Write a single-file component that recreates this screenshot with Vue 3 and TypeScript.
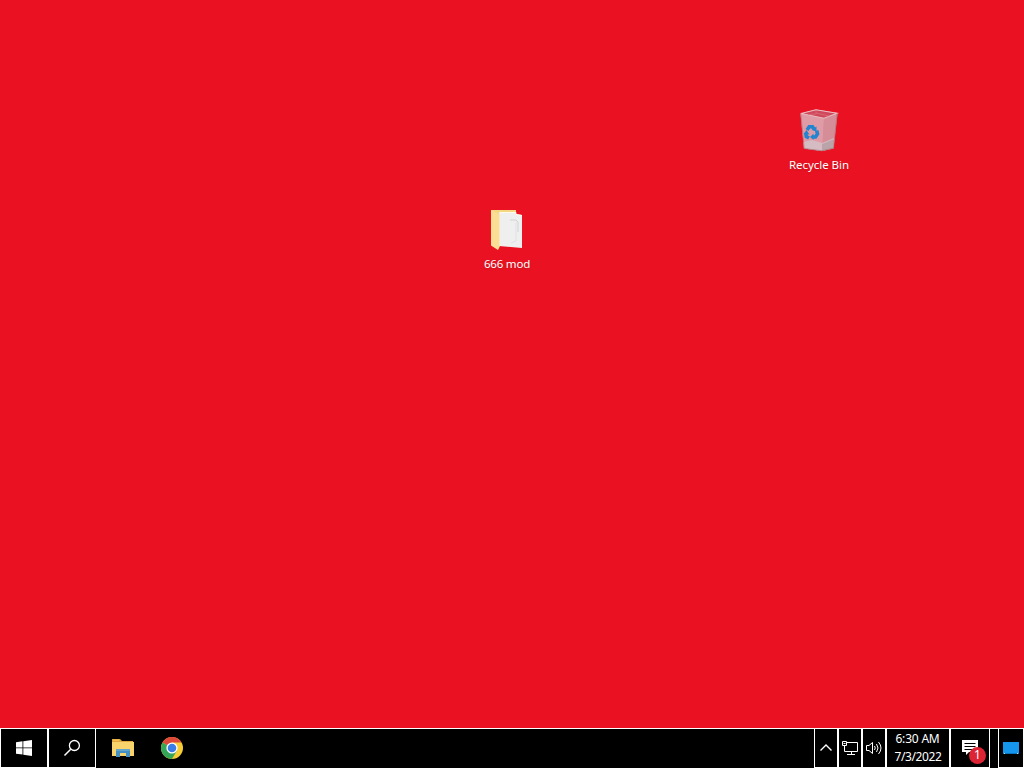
<script setup lang="ts">
const time = '6:30 AM'
const date = '7/3/2022'
const notifications = 1
</script>

<template>
  <div class="screen">
    <main class="desktop">
      <div class="shortcut bin">
        <svg width="42" height="48" viewBox="0 0 42 48">
          <path d="M2.5 7.5 18 3.5 39.5 7 35.5 42.5 24 45 6 42.5Z" fill="#df8c98" />
          <path d="M2.5 7.5 26 12.5 24 45 6 42.5Z" fill="#e09ca6" />
          <path d="M26 12.5 39.5 7 35.5 42.5 24 45Z" fill="#d58d97" />
          <path d="M5.5 36 14 34 24 37 36.3 32 35.5 42 24 45 6 42.5Z" fill="#d4bcc2" />
          <path d="M24 38 36.3 33 35.5 42 24 45Z" fill="#bba3aa" />
          <path d="M3 7.5 18 3.7 39 7.3 26 12.2Z" fill="#d0485b" stroke="#e9bdc0" stroke-width="1.1" />
          <path d="M18 4.5V8L10 8.5M18 7 31 10" fill="none" stroke="#d97480" stroke-width=".7" />
          <path d="M2.8 8 6.2 42.5 24 44.8 35.5 42.2 39.2 7.5" fill="none" stroke="#a96e72" stroke-width=".7" />
          <g fill="none" stroke="#2385cf" stroke-width="3.6">
            <path d="M9 24 11.2 20.7 14.5 20.7 16 23" />
            <path d="M18.7 24.5 19.5 28 17.5 31H14.5" />
            <path d="M11 32 8.3 30.5 7.8 27.5" />
          </g>
          <path d="M18.5 20.5 18.5 25.5 13.5 24ZM15.5 27.5V34L12 31ZM5.5 28 8.5 24 11.5 28.5Z" fill="#2385cf" />
        </svg>
        <span class="bin-label">Recycle Bin</span>
      </div>
      <div class="shortcut folder">
        <svg width="34" height="42" viewBox="0 0 34 42">
          <path d="M1 1H26V36H1Z" fill="#f4d683" />
          <path d="M9 3H26V5L32 6V39L9 37Z" fill="#efefef" />
          <path d="M10 3.5H26V5.5L32 6.5" fill="none" stroke="#fffbe9" stroke-width="1" />
          <path d="M20 11H26L28 13V23" fill="none" stroke="#d0d2d4" stroke-width="1" />
          <path d="M26 13V32L21 34" fill="none" stroke="#e0e1e3" stroke-width="1" />
          <path d="M1 1.5 10 5V37L8 41 1 36.5Z" fill="#fbdd93" />
          <path d="M9.5 5V37" stroke="#f8e9bd" stroke-width="1" />
        </svg>
        <span class="folder-label">666 mod</span>
      </div>
    </main>

    <footer class="taskbar">
      <button class="cell start" aria-label="Start">
        <svg width="16" height="16" viewBox="0 0 16 16" fill="#fff">
          <path d="M0 2.3 6.5 1.3V7.5H0ZM7.3 1.2 16 0V7.5H7.3ZM0 8.3H6.5V14.6L0 13.7ZM7.3 8.3H16V16L7.3 14.8Z" />
        </svg>
      </button>
      <button class="cell start" aria-label="Search">
        <svg width="18" height="18" viewBox="0 0 18 18" fill="none" stroke="#fff">
          <circle cx="11.4" cy="6.5" r="5" stroke-width="1.3" />
          <path d="M7.7 10.3 1.5 16.5" stroke-width="1.5" />
        </svg>
      </button>
      <div class="app explorer">
        <svg width="22" height="20" viewBox="0 0 22 20">
          <path d="M0 1H8L10 3H21V18H0Z" fill="#dfa83f" />
          <path d="M0 4H22V18H0Z" fill="#f9d36b" />
          <path d="M1 1.5H7V3H1Z" fill="#f5bd4b" />
          <path d="M4 11H18V19H14V15H8V19H4Z" fill="#448fc4" />
          <path d="M4 11H18V13H4Z" fill="#64a5cc" />
        </svg>
      </div>
      <div class="app chrome">
        <svg width="22" height="22" viewBox="0 0 22 22">
          <circle cx="11" cy="11" r="11" fill="#f7cc35" />
          <path d="M11 11 1.5 5.5A11 11 0 0 1 20.5 5.5H11Z" fill="#df4738" />
          <path d="M1.5 5.5A11 11 0 0 0 11 22L15.8 13.8 11 11Z" fill="#35a557" />
          <circle cx="11" cy="11" r="5.6" fill="#fff" />
          <circle cx="11" cy="11" r="4.3" fill="#3b7de8" />
        </svg>
      </div>
      <div class="spacer"></div>
      <button class="cell tray" aria-label="Show hidden icons">
        <svg width="14" height="10" viewBox="0 0 14 10" fill="none" stroke="#fff" stroke-width="1.4">
          <path d="M1.5 7.5 7 2 12.5 7.5" />
        </svg>
      </button>
      <button class="cell tray" aria-label="Network">
        <svg width="16" height="14" viewBox="0 0 16 14" fill="none" stroke="#fff">
          <path d="M5 1.5H15.5V10.5H2.5V5M9.5 10.5V13M5 13.5H13M.5.5H4.5V4.5H.5Z" />
          <path d="M1.5 2.5H3.5" />
        </svg>
      </button>
      <button class="cell tray" aria-label="Volume">
        <svg width="18" height="14" viewBox="0 0 18 14" fill="none" stroke="#fff" stroke-width="1">
          <path d="M1.5 4.5H4L7.5 1.5V12.5L4 9.5H1.5ZM9.5 5Q11 7 9.5 9M11.5 3Q14.5 7 11.5 11M13.5 1Q18.5 7 13.5 13" />
        </svg>
      </button>
      <div class="cell clock"><span class="time">{{ time }}</span><span class="date">{{ date }}</span></div>
      <button class="cell action" aria-label="Notifications">
        <svg width="16" height="16" viewBox="0 0 16 16">
          <path d="M0 0H16V12H7L4 15V12H0Z" fill="#fff" />
          <path d="M2.5 3.5H13.5M2.5 6.5H13.5M2.5 9.5H10" stroke="#000" />
        </svg>
        <span class="badge">{{ notifications }}</span>
      </button>
      <button class="cell peek" aria-label="Desktop">
        <svg width="16" height="13" viewBox="0 0 16 13">
          <path d="M0 0H16V12H0Z" fill="#1695ed" />
          <path d="M0 11.5H16" stroke="#0874bd" />
          <path d="M1 11.5H2M14 11.5H15" stroke="#b9e0f7" />
        </svg>
      </button>
    </footer>
  </div>
</template>

<style>
body { margin: 0; overflow: hidden; }
</style>

<style scoped>
.screen {
  width: 1024px;
  height: 768px;
  display: flex;
  flex-direction: column;
  font-family: "Noto Sans", "Open Sans", sans-serif;
  font-size: 12px;
  color: #fff;
}
.desktop { position: relative; flex: 1; background: #ea1222; }
.shortcut {
  position: absolute;
  width: 76px;
  display: flex;
  flex-direction: column;
  align-items: center;
  font-size: 11.5px;
  line-height: 16px;
  white-space: nowrap;
  text-shadow: 0 1px 2px rgba(90, 0, 0, .25);
}
.shortcut svg { flex: none; }
.bin { left: 781px; top: 106px; }
.folder { left: 469px; top: 209px; }
.bin-label { margin-top: 3px; letter-spacing: -0.04px; }
.folder-label { margin-top: 5px; letter-spacing: -0.2px; }
.taskbar {
  height: 40px;
  flex: none;
  display: flex;
  box-sizing: border-box;
  background: linear-gradient(#fff 1px, #000 1px);
}
.cell {
  box-sizing: border-box;
  height: 40px;
  flex: none;
  display: flex;
  align-items: center;
  justify-content: center;
  padding: 0;
  border: 1px solid #fff;
  border-radius: 0;
  background: #000;
  color: #fff;
  font: inherit;
}
.start { width: 48px; }
.app { width: 48px; display: flex; align-items: center; justify-content: center; }
.explorer { margin-left: 3px; }
.chrome { margin-left: 1px; }
.spacer { flex: 1; }
.tray { width: 24px; }
.clock { width: 64px; flex-direction: column; line-height: 18px; letter-spacing: -0.4px; }
.time { letter-spacing: -0.2px; margin-right: 1px; }
.action { width: 40px; position: relative; }
.badge {
  position: absolute;
  left: 18px;
  top: 18px;
  width: 17px;
  height: 17px;
  border-radius: 50%;
  background: #dc2435;
  line-height: 16px;
  text-align: center;
}
.peek { width: 26px; margin-left: 8px; }
</style>
